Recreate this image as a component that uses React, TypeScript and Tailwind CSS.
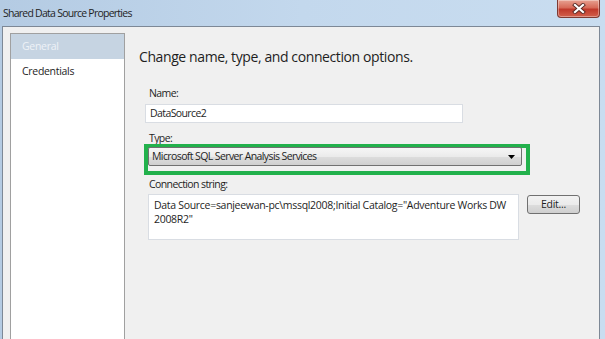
import React from "react";

const font = { fontFamily: '"Open Sans", "Noto Sans", Arial, sans-serif' };

function CloseButton() {
  return (
    <div className="mr-[5px] flex h-[18px] w-[43px] items-center justify-center rounded-b-[4px] border border-t-0 border-[#7e3a32] bg-[linear-gradient(#e7a191_0%,#d76a58_45%,#c0392b_55%,#d2604c_100%)] shadow-[inset_0_0_0_1px_rgba(255,255,255,0.35)]">
      <svg width="14" height="11" viewBox="0 0 14 11">
        <path d="M3 2 L11 9 M11 2 L3 9" stroke="#5a2a25" strokeWidth="4" strokeLinecap="square" />
        <path d="M3 2 L11 9 M11 2 L3 9" stroke="#ffffff" strokeWidth="2.2" strokeLinecap="square" />
      </svg>
    </div>
  );
}

export default function App() {
  return (
    <div
      className="flex h-[339px] w-[605px] flex-col overflow-hidden bg-[linear-gradient(90deg,#b4cbe3_0%,#c3d8ed_50%,#c9ddf0_100%)] text-[#1e1e1e]"
      style={font}
    >
      <div className="flex h-[26px] shrink-0 items-start justify-between">
        <div className="pl-[3px] pt-[6px] text-[10.5px] leading-[14px] tracking-[-0.75px] text-[#1f1f1f]">
          Shared Data Source Properties
        </div>
        <CloseButton />
      </div>
      <div className="ml-[2px] mr-[5px] flex flex-1 border-l border-r border-t border-[#7d8896] bg-[#f0f0f0] pl-[7px] pt-[6px]">
        <div className="w-[115px] shrink-0 border border-b-0 border-[#a0a0a0] bg-white">
          <div className="flex h-[25px] items-center bg-[#c6d4e2] pl-[11px] text-[10.5px] tracking-[-0.3px] text-[#eef2f7]">
            General
          </div>
          <div className="flex h-[25px] items-center pl-[11px] text-[10.5px] tracking-[-0.3px] text-[#1e1e1e]">
            Credentials
          </div>
        </div>
        <div className="flex flex-1 flex-col pl-[14px] pt-[14px]">
          <div className="h-[20px] text-[14px] leading-[20px] tracking-[-0.4px] text-[#1e1e1e]">
            Change name, type, and connection options.
          </div>
          <div className="ml-[6px] mt-[20px] flex flex-col text-[10.5px] tracking-[-0.6px]">
            <div className="pl-[4px] leading-[12px]">Name:</div>
            <div className="mt-[5px] flex h-[19px] w-[318px] items-center border border-[#d9dde3] bg-white pl-[4px]">
              DataSource2
            </div>
            <div className="mt-[9px] pl-[4px] leading-[12px]">Type:</div>
            <div className="-ml-[1px] flex h-[31px] w-[386px] items-start border-[4px] border-[#22b14c] pr-[4px]">
              <div className="-mt-[1px] flex h-[19px] flex-1 items-center justify-between rounded-[2px] border border-[#707070] bg-[linear-gradient(#f6f6f6_0%,#ebebeb_50%,#dddddd_51%,#cfcfcf_100%)] pl-[3px] pr-[6px]">
                <span>Microsoft SQL Server Analysis Services</span>
                <svg width="7" height="4" viewBox="0 0 7 4">
                  <path d="M0 0 H7 L3.5 4 Z" fill="#000" />
                </svg>
              </div>
            </div>
            <div className="mt-[3px] pl-[4px] leading-[12px]">Connection string:</div>
            <div className="mt-[4px] flex items-start gap-[8px]">
              <div className="ml-[3px] h-[46px] w-[371px] border border-[#d9dde3] bg-white px-[5px] pt-[3px] leading-[14px] tracking-[-0.3px]">
                Data Source=sanjeewan-pc\mssql2008;Initial Catalog="Adventure Works DW
                <br />
                2008R2"
              </div>
              <div className="mt-[1px] flex h-[19px] w-[53px] items-center justify-center rounded-[3px] border border-[#707070] bg-[linear-gradient(#f2f2f2_0%,#ebebeb_50%,#dddddd_51%,#cfcfcf_100%)] tracking-[-0.3px]">
                Edit...
              </div>
            </div>
          </div>
        </div>
      </div>
    </div>
  );
}
